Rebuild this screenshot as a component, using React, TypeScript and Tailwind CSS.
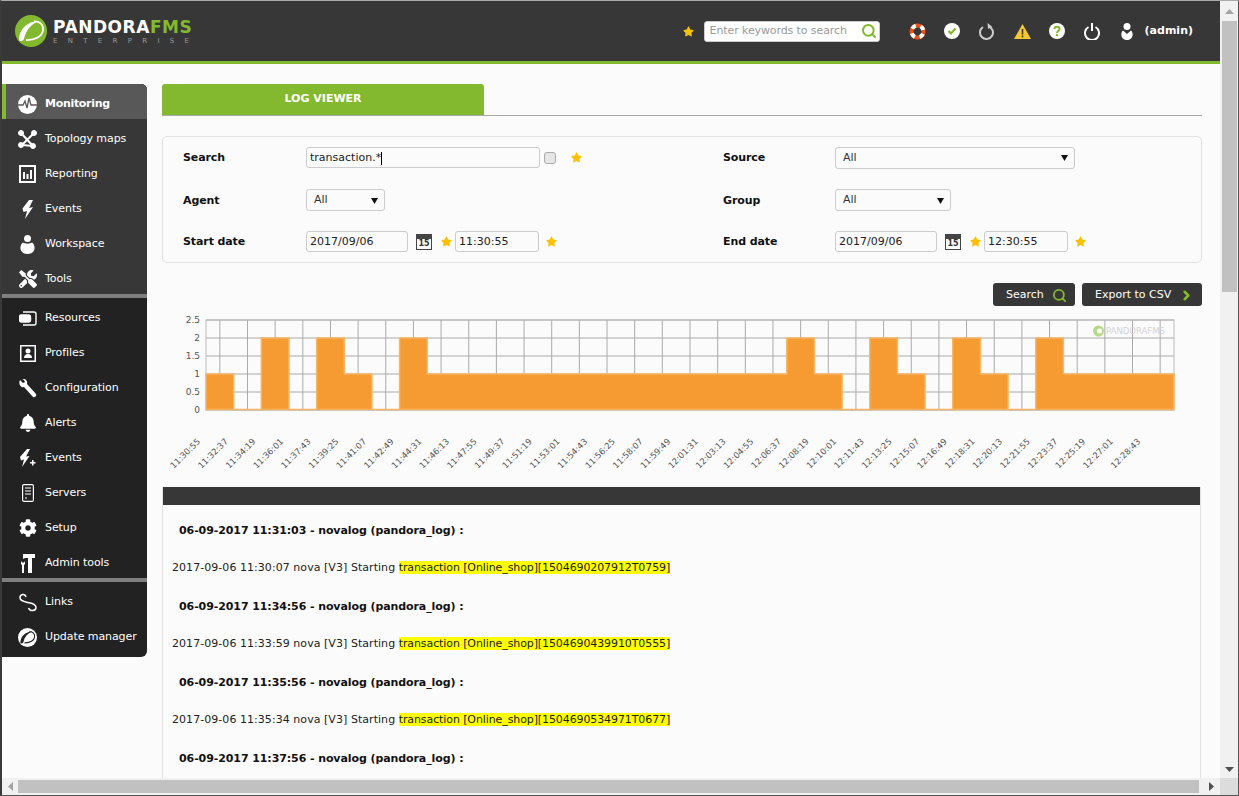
import type { ReactNode } from "react";
import { FaBell, FaCog, FaStar, FaTools } from "react-icons/fa";
import { ChevronRight, Search as SearchIcon } from "lucide-react";

const font = "font-['DejaVu_Sans',sans-serif]";

// chart data, one bar per 1:42 step from 11:30:55
const bars = [1, 0, 2, 0, 2, 1, 0, 2, 1, 1, 1, 1, 1, 1, 1, 1, 1, 1, 1, 1, 1, 2, 1, 0, 2, 1, 0, 2, 1, 0, 2, 1, 1, 1, 1];
const barW = 968 / 35;

const areaPath = () => {
  let d = "M206 409.500";
  bars.forEach((v, i) => {
    const y = v === 0 ? 409.5 : 410 - v * 36;
    d += `L${206 + barW * i} ${y}L${206 + barW * (i + 1)} ${y}`;
  });
  return d + "L1174 409.500Z";
};

const timeLabel = (i: number) => {
  const total = 11 * 3600 + 30 * 60 + 55 + i * 102;
  const pad = (n: number) => String(n).padStart(2, "0");
  return `${pad(Math.floor(total / 3600))}:${pad(Math.floor(total / 60) % 60)}:${pad(total % 60)}`;
};

const PandoraMark = ({ size, bg, fg }: { size: number; bg: string; fg: string }) => (
  <svg width={size} height={size} viewBox="0 0 32 32">
    <circle cx="16" cy="16" r="16" fill={bg} />
    <path d="M4 25C4 15 12 6 24 6 16 9 11 15 9 24 8 26 5 27 4 25Z" fill={fg} />
    <path d="M19 6.500C25 6 28.500 10 28 15 27.500 21 20 25.500 11 25" fill="none" stroke={fg} strokeWidth="1.800" />
  </svg>
);

const icons: Record<string, ReactNode> = {
  monitoring: (
    <svg width="19" height="19" viewBox="0 0 19 19">
      <circle cx="9.500" cy="9.500" r="9.500" fill="#fff" />
      <path d="M0 10H5L7 6 9 13 11 3 13 10H19" fill="none" stroke="#585858" strokeWidth="1.300" />
    </svg>
  ),
  topology: (
    <svg width="19" height="19" viewBox="0 0 19 19" fill="#fff" stroke="#fff">
      <path d="M3 3 15 16M16 3 4 15 15 16" strokeWidth="2" fill="none" />
      <circle cx="3" cy="3" r="2.500" />
      <circle cx="16" cy="3" r="2.500" />
      <circle cx="3" cy="15" r="2.500" />
      <circle cx="15" cy="16" r="2.500" />
    </svg>
  ),
  reporting: (
    <svg width="17" height="18" viewBox="0 0 17 18" fill="#fff">
      <path d="M0 0H17V18H0ZM2 2V16H15V2Z" fillRule="evenodd" />
      <rect x="4" y="7" width="2" height="7" />
      <rect x="7.500" y="9" width="2" height="5" />
      <rect x="11" y="5" width="2" height="9" />
    </svg>
  ),
  events: (
    <svg width="18" height="19" viewBox="0 0 18 19" fill="#fff">
      <path d="M10 0 3.500 8.500 4.500 12 8 11 6 19 14 7 10 8 14 0Z" />
    </svg>
  ),
  workspace: (
    <svg width="15" height="19" viewBox="0 0 15 19" fill="#fff">
      <circle cx="7.500" cy="3.500" r="3.500" />
      <path d="M3 7.500C-1 10-1 19 7.500 19S16 10 12 7.500C10 9 5 9 3 7.500Z" />
    </svg>
  ),
  tools: <FaTools size={18} color="#fff" />,
  resources: (
    <svg width="18" height="15" viewBox="0 0 18 15" fill="none" stroke="#fff" strokeWidth="1.400">
      <path d="M4 1H15C16.500 1 17 2 17 3V12C17 13 16.500 14 15 14H4" />
      <rect x="0.500" y="4" width="11" height="7" rx="2" fill="#fff" />
    </svg>
  ),
  profiles: (
    <svg width="16" height="17" viewBox="0 0 16 17" fill="#fff">
      <path d="M0 0H16V17H0ZM1.500 1.500V15.500H14.500V1.500Z" fillRule="evenodd" />
      <circle cx="8" cy="6" r="2.500" />
      <path d="M4 13C4 10 6 9 8 9S12 10 12 13Z" />
    </svg>
  ),
  configuration: (
    <svg width="18" height="19" viewBox="0 0 18 19" fill="#fff">
      <path d="M1 1 4 4 6 3 5 1 3 0C6-1 9 2 8 5L17 15C18 17 16 19 14 18L5 8C2 9-1 5 1 1Z" />
    </svg>
  ),
  alerts: <FaBell size={18} color="#fff" />,
  eventsAdd: (
    <svg width="18" height="18" viewBox="0 0 18 18" fill="#fff">
      <path d="M8 0 1 8 2 11.500 5 10.500 3 18 10.500 7 7 7.500 11 0Z" />
      <path d="M11 13H13V11H14.500V13H16.500V14.500H14.500V16.500H13V14.500H11Z" />
    </svg>
  ),
  servers: (
    <svg width="12" height="18" viewBox="0 0 12 18" fill="none" stroke="#fff" strokeWidth="1.200">
      <rect x="0.600" y="0.600" width="10.800" height="16.800" rx="1.500" />
      <path d="M3 4H9M3 7H9M3 10H9M3 14H5" />
    </svg>
  ),
  setup: <FaCog size={18} color="#fff" />,
  adminTools: (
    <svg width="16" height="20" viewBox="0 0 16 20" fill="#fff">
      <path d="M3 1H15V5H12V20H8V5H6C5 5 4 5 3 6Z" />
      <path d="M1 8V11L2 12V20H4V12L5 11V8L4 9.500H2Z" />
    </svg>
  ),
  links: (
    <svg width="18" height="19" viewBox="0 0 18 19" fill="none" stroke="#fff" strokeWidth="1.500">
      <path d="M7 4C6 0 1 1 1 4.500S5 8.500 9 9.500 17 11 17 14.500 11 19 9.500 15" />
    </svg>
  ),
  update: <PandoraMark size={19} bg="#fff" fg="#222" />,
};

const SideRow = ({ icon, label, active }: { icon: string; label: string; active?: boolean }) => (
  <div
    className={`flex h-[35px] items-center pt-[5px] text-[11px] text-white ${
      active ? "border-l-4 border-[#82b92e] bg-[#585858] pl-3 font-bold tracking-[-0.3px]" : "pl-4 tracking-[-0.08px]"
    }`}
  >
    <span className="flex w-[19px] shrink-0 justify-center">{icons[icon]}</span>
    <span className="ml-2">{label}</span>
  </div>
);

const Sidebar = () => (
  <div className="mt-5 h-[573px] w-[145px] shrink-0 overflow-hidden rounded-r-md bg-[#222]">
    <div className="bg-[#373737]">
      <SideRow icon="monitoring" label="Monitoring" active />
      <SideRow icon="topology" label="Topology maps" />
      <SideRow icon="reporting" label="Reporting" />
      <SideRow icon="events" label="Events" />
      <SideRow icon="workspace" label="Workspace" />
      <SideRow icon="tools" label="Tools" />
    </div>
    <div className="h-1 bg-[#7f7f7f]" />
    <SideRow icon="resources" label="Resources" />
    <SideRow icon="profiles" label="Profiles" />
    <SideRow icon="configuration" label="Configuration" />
    <SideRow icon="alerts" label="Alerts" />
    <SideRow icon="eventsAdd" label="Events" />
    <SideRow icon="servers" label="Servers" />
    <SideRow icon="setup" label="Setup" />
    <SideRow icon="adminTools" label="Admin tools" />
    <div className="h-1 bg-[#7f7f7f]" />
    <SideRow icon="links" label="Links" />
    <SideRow icon="update" label="Update manager" />
  </div>
);

const TopSlot = ({ children }: { children: ReactNode }) => (
  <span className="flex w-[35px] shrink-0 justify-center">{children}</span>
);

const HeaderBar = () => (
  <div className="h-[63px] shrink-0 border-b-[3px] border-[#82b92e] bg-[#373737]">
    <div className="flex h-[60px] items-center pl-[13px] pr-[27px]">
      <PandoraMark size={32} bg="#82b92e" fg="#fff" />
      <div className="ml-[6px] mt-[2px]">
        <div className="text-[17px] font-bold leading-[17px] tracking-[0.55px]">
          <span className="text-white">PANDORA</span>
          <span className="text-[#82b92e]">FMS</span>
        </div>
        <div className="mt-[1px] text-[7px] leading-[9px] tracking-[10.300px] text-[#9a9a9a]">ENTERPRISE</div>
      </div>
      <div className="ml-auto flex items-center">
        <FaStar size={11} color="#f5c400" />
        <div className="ml-[10px] flex h-[21px] w-[176px] items-center justify-between rounded-[3px] border border-[#ccc] bg-white pl-[5px] pr-[2px] text-[11px] tracking-[-0.1px] text-[#999]">
          Enter keywords to search
          <SearchIcon size={16} color="#82b92e" strokeWidth={3} />
        </div>
        <div className="ml-[20px] flex items-center">
          <TopSlot>
            <svg width="17" height="17" viewBox="0 0 17 17" fill="none">
              <circle cx="8.500" cy="8.500" r="6" stroke="#e8521a" strokeWidth="4" />
              <circle cx="8.500" cy="8.500" r="6" stroke="#fff" strokeWidth="4" strokeDasharray="4.400 5.025" strokeDashoffset="6.900" />
            </svg>
          </TopSlot>
          <TopSlot>
            <svg width="16" height="16" viewBox="0 0 16 16">
              <circle cx="8" cy="8" r="8" fill="#fff" />
              <path d="M4.500 8 7 10.500 11.500 5.500" fill="none" stroke="#82b92e" strokeWidth="2.200" />
            </svg>
          </TopSlot>
          <TopSlot>
            <svg width="16" height="17" viewBox="0 0 16 17" fill="none">
              <path d="M10 3.500A6.500 6.500 0 1 1 4 4" stroke="#ccc" strokeWidth="2" />
              <path d="M8.500 0 13 3.500 9 6Z" fill="#ccc" />
            </svg>
          </TopSlot>
          <TopSlot>
            <svg width="17" height="15" viewBox="0 0 17 15">
              <path d="M8.500 0 17 15H0Z" fill="#f5c733" />
              <rect x="7.700" y="5" width="1.600" height="5.500" fill="#373737" />
              <rect x="7.700" y="11.500" width="1.600" height="1.800" fill="#373737" />
            </svg>
          </TopSlot>
          <TopSlot>
            <svg width="16" height="16" viewBox="0 0 16 16">
              <circle cx="8" cy="8" r="8" fill="#fff" />
              <path d="M5.500 6C5.500 3 10.500 3 10.500 6 10.500 8 8 8 8 10" fill="none" stroke="#82b92e" strokeWidth="2" />
              <rect x="7" y="11" width="2" height="2" fill="#82b92e" />
            </svg>
          </TopSlot>
          <TopSlot>
            <svg width="16" height="17" viewBox="0 0 16 17" fill="none" stroke="#fff" strokeWidth="2">
              <path d="M4.500 4A7 7 0 1 0 11.500 4M8 0V8" />
            </svg>
          </TopSlot>
          <TopSlot>
            <svg width="12" height="17" viewBox="0 0 12 17" fill="#fff">
              <circle cx="6" cy="3.500" r="3.500" />
              <path d="M2 7.500C-1 10 0 17 6 17S13 10 10 7.500L6 11Z" />
            </svg>
          </TopSlot>
        </div>
        <span className="text-[11px] font-bold text-white">(admin)</span>
      </div>
    </div>
  </div>
);

const Star = () => <FaStar size={11} color="#fbc000" className="shrink-0" />;

const Field = ({ w, children }: { w: string; children: ReactNode }) => (
  <div className={`flex h-[21px] ${w} shrink-0 items-center rounded-[3px] border border-[#ccc] bg-[#fbfbfb] pl-[3px] pt-px text-[11px] text-[#222]`}>
    {children}
  </div>
);

const SelectBox = ({ w }: { w: string }) => (
  <div className={`flex h-[22px] ${w} shrink-0 items-center justify-between rounded-[3px] border border-[#ccc] bg-[#fbfbfb] pl-[7px] pr-[6px] pt-px text-[11px] text-[#333]`}>
    All
    <svg width="7" height="6" viewBox="0 0 7 6" fill="#111">
      <path d="M0 0H7L3.500 6Z" />
    </svg>
  </div>
);

const Calendar = () => (
  <div className="ml-2 h-4 w-4 shrink-0 border border-[#444] bg-white">
    <div className="h-1 bg-[#444]" />
    <div className="text-center text-[8px] font-bold leading-[10px] text-[#333]">15</div>
  </div>
);

const Label = ({ w, children }: { w: string; children: ReactNode }) => (
  <div className={`${w} shrink-0 pt-[2px] text-[11px] font-bold tracking-[-0.1px] text-[#111]`}>{children}</div>
);

const DateTime = ({ time }: { time: string }) => (
  <>
    <Field w="w-[102px]">2017/09/06</Field>
    <Calendar />
    <span className="ml-[9px]">
      <Star />
    </span>
    <span className="ml-[3px]">
      <Field w="w-[84px]">{time}</Field>
    </span>
    <span className="ml-[7px]">
      <Star />
    </span>
  </>
);

const FilterPanel = () => (
  <div className="mt-5 h-[127px] rounded-[5px] border border-[#e2e2e2] pl-5 pt-[10px]">
    <div className="flex h-[21px] items-center">
      <div className="flex w-[540px] items-center">
        <Label w="w-[123px]">Search</Label>
        <Field w="w-[234px]">
          transaction.*<span className="h-[13px] w-px bg-black" />
        </Field>
        <span className="ml-1 h-3 w-3 rounded-[3px] border border-[#aaa] bg-[#e6e6e6]" />
        <span className="ml-[15px]">
          <Star />
        </span>
      </div>
      <Label w="w-[112px]">Source</Label>
      <SelectBox w="w-[240px]" />
    </div>
    <div className="mt-[21px] flex h-[22px] items-center">
      <div className="flex w-[540px] items-center">
        <Label w="w-[123px]">Agent</Label>
        <SelectBox w="w-[79px]" />
      </div>
      <Label w="w-[112px]">Group</Label>
      <SelectBox w="w-[116px]" />
    </div>
    <div className="mt-5 flex h-[21px] items-center">
      <div className="flex w-[540px] items-center">
        <Label w="w-[123px]">Start date</Label>
        <DateTime time="11:30:55" />
      </div>
      <Label w="w-[112px]">End date</Label>
      <DateTime time="12:30:55" />
    </div>
  </div>
);

const Chart = () => (
  <svg className="block h-[181px] w-[1040px]" viewBox="162 306 1040 181">
    {bars.map((_, i) => (
      <line key={i} x1={206 + barW * (i + 0.5)} x2={206 + barW * (i + 0.5)} y1={320} y2={410} stroke="#aaa" strokeWidth="1" />
    ))}
    {[320, 338, 356, 374, 392, 410].map((y) => (
      <line key={y} x1={206} x2={1174} y1={y} y2={y} stroke="#aaa" strokeWidth="1" />
    ))}
    <rect x="206" y="320" width="968" height="90" fill="none" stroke="#bbb" />
    <path d={areaPath()} fill="#f59b32" stroke="#f8b565" strokeWidth="1.500" />
    {["2.5", "2", "1.5", "1", "0.5", "0"].map((t, i) => (
      <text key={t} x="200" y={323 + i * 18} textAnchor="end" fontSize="9" fill="#555" fontFamily="DejaVu Sans">
        {t}
      </text>
    ))}
    {bars.map((_, i) => {
      const x = 206 + barW * (i + 0.5) - 19;
      return (
        <text key={i} x={x} y={442} textAnchor="end" fontSize="8.500" fill="#555" fontFamily="DejaVu Sans" transform={`rotate(-45 ${x} 442)`}>
          {timeLabel(i)}
        </text>
      );
    })}
    <circle cx="1098.500" cy="331" r="5.500" fill="#b7d98a" />
    <circle cx="1099.500" cy="331" r="2.500" fill="#fbfbfb" />
    <text x="1106" y="334" fontSize="8.500" fill="#d4d4d4" fontFamily="DejaVu Sans">
      PANDORAFMS
    </text>
  </svg>
);

const logs = [
  ["06-09-2017 11:31:03", "2017-09-06 11:30:07", "1504690207912T0759"],
  ["06-09-2017 11:34:56", "2017-09-06 11:33:59", "1504690439910T0555"],
  ["06-09-2017 11:35:56", "2017-09-06 11:35:34", "1504690534971T0677"],
];

const LogPanel = () => (
  <div className="h-[400px] w-[1039px] border-x border-[#e2e2e2]">
    <div className="h-[18px] bg-[#373737]" />
    <div className="pt-[19px] text-[11px] leading-[14px] text-[#222]">
      {logs.map(([head, time, id]) => (
        <div key={id} className="pb-[25px]">
          <p className="mb-[23px] pl-4 font-bold tracking-[-0.09px] text-[#111]">{head} - novalog (pandora_log) :</p>
          <p className="pl-[9px]">
            <span className="tracking-[0.05px]">{time} nova [V3] Starting </span>
            <mark className="bg-[#ffff00] tracking-[-0.1px] text-[#222]">transaction [Online_shop][{id}]</mark>
          </p>
        </div>
      ))}
      <p className="pl-4 font-bold tracking-[-0.09px] text-[#111]">06-09-2017 11:37:56 - novalog (pandora_log) :</p>
    </div>
  </div>
);

const Scrollbars = {
  Vertical: () => (
    <div className="flex w-[18px] shrink-0 flex-col items-center bg-[#f1f1f1]">
      <svg className="mt-[8px] shrink-0" width="9" height="5" viewBox="0 0 9 5" fill="#a3a3a3">
        <path d="M4.500 0 9 5H0Z" />
      </svg>
      <div className="mt-[7px] h-[271px] w-[15px] shrink-0 bg-[#c1c1c1]" />
      <svg className="mb-[6px] mt-auto shrink-0" width="9" height="5" viewBox="0 0 9 5" fill="#505050">
        <path d="M0 0H9L4.500 5Z" />
      </svg>
    </div>
  ),
  Horizontal: () => (
    <div className="flex h-[17px] shrink-0 items-center bg-[#f1f1f1]">
      <svg className="ml-[6px] shrink-0" width="5" height="9" viewBox="0 0 5 9" fill="#a3a3a3">
        <path d="M5 0V9L0 4.500Z" />
      </svg>
      <div className="ml-[5px] h-[13px] w-[1181px] shrink-0 bg-[#c1c1c1]" />
      <svg className="ml-[10px] shrink-0" width="5" height="9" viewBox="0 0 5 9" fill="#505050">
        <path d="M0 0 5 4.500 0 9Z" />
      </svg>
      <div className="ml-auto h-[17px] w-[18px] bg-[#dcdcdc]" />
    </div>
  ),
};

export default function App() {
  return (
    <div className={`flex h-[796px] w-full flex-col overflow-hidden border-b border-l-2 border-r border-t border-b-[#555] border-l-[#3a3a3a] border-r-[#555] border-t-[#aaa] bg-[#fbfbfb] ${font}`}>
      <div className="flex min-h-0 flex-1">
        <div className="flex min-w-0 flex-1 flex-col">
          <HeaderBar />
          <div className="flex min-h-0 flex-1 overflow-hidden">
            <Sidebar />
            <div className="ml-[15px] w-[1040px] shrink-0 pt-5">
              <div className="h-[32px] border-b border-[#aaa]">
                <div className="flex h-[31px] w-[322px] items-center justify-center rounded-t-[3px] bg-[#82b92e] text-[11px] font-bold text-white">
                  LOG VIEWER
                </div>
              </div>
              <FilterPanel />
              <div className="mt-5 flex h-[23px] justify-end gap-[7px] text-[11px] text-white">
                <div className="flex w-[82px] items-center justify-between rounded-[3px] bg-[#373737] pl-[13px] pr-[8px] pt-px">
                  Search
                  <SearchIcon size={15} color="#82b92e" strokeWidth={3} />
                </div>
                <div className="flex w-[120px] items-center justify-between rounded-[3px] bg-[#373737] pl-[13px] pr-[8px] pt-px">
                  Export to CSV
                  <ChevronRight size={15} color="#82b92e" strokeWidth={4} />
                </div>
              </div>
              <Chart />
              <LogPanel />
            </div>
          </div>
        </div>
        <Scrollbars.Vertical />
      </div>
      <Scrollbars.Horizontal />
    </div>
  );
}
